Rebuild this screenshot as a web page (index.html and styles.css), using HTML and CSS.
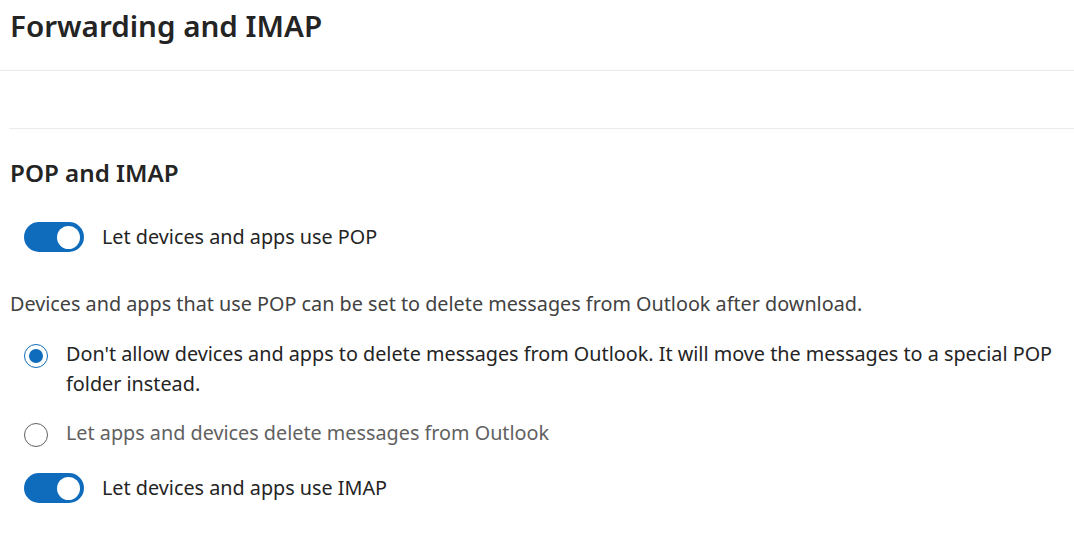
FILE: index.html
```html
<!DOCTYPE html>
<html lang="en">
<head>
<meta charset="utf-8">
<title>Forwarding and IMAP</title>
<link rel="stylesheet" href="styles.css">
</head>
<body>
<header class="page-header">
  <h1 class="page-title">Forwarding and IMAP</h1>
</header>
<div class="forwarding-area"></div>
<section class="section">
  <h2 class="section-title">POP and IMAP</h2>
  <label class="toggle-row">
    <span class="toggle on"><span class="knob"></span></span>
    <span class="toggle-label">Let devices and apps use POP</span>
  </label>
  <p class="description">Devices and apps that use POP can be set to delete messages from Outlook after download.</p>
  <div class="radio-group">
    <label class="radio-row">
      <span class="radio checked"><span class="dot"></span></span>
      <span class="radio-label">Don't allow devices and apps to delete messages from Outlook. It will move the messages to a special POP folder instead.</span>
    </label>
    <label class="radio-row">
      <span class="radio"></span>
      <span class="radio-label muted">Let apps and devices delete messages from Outlook</span>
    </label>
  </div>
  <label class="toggle-row">
    <span class="toggle on"><span class="knob"></span></span>
    <span class="toggle-label">Let devices and apps use IMAP</span>
  </label>
</section>
</body>
</html>
```
FILE: styles.css
```css
html, body {
  margin: 0;
  padding: 0;
  background: #ffffff;
}
body {
  font-family: "Noto Sans", "Open Sans", "DejaVu Sans", sans-serif;
  color: #242424;
  width: 1074px;
  height: 541px;
  overflow: hidden;
}
.page-header {
  height: 71px;
  border-bottom: 1px solid #ebebeb;
  padding-left: 10px;
  box-sizing: border-box;
  display: flex;
  align-items: flex-start;
}
.page-title {
  margin: 0;
  padding-top: 6px;
  font-size: 29.6px;
  font-weight: 600;
  line-height: 40px;
  color: #242424;
}
.forwarding-area {
  margin-left: 9px;
  height: 57px;
  border-bottom: 1px solid #ebebeb;
}
.section {
  padding-left: 10px;
  display: flex;
  flex-direction: column;
}
.section-title {
  margin: 28px 0 0 0;
  font-size: 24.2px;
  font-weight: 600;
  line-height: 32px;
}
.toggle-row {
  display: flex;
  align-items: center;
  gap: 18px;
  margin-left: 14px;
}
.toggle-row:first-of-type {
  margin-top: 33px;
}
.toggle {
  width: 60px;
  height: 30px;
  border-radius: 15px;
  background: #0f6cbd;
  box-sizing: border-box;
  display: flex;
  align-items: center;
  justify-content: flex-end;
  padding-right: 4px;
  flex-shrink: 0;
}
.knob {
  width: 23px;
  height: 23px;
  border-radius: 50%;
  background: #ffffff;
}
.toggle-label {
  font-size: 19.8px;
  font-weight: 400;
  line-height: 28px;
  color: #242424;
}
.description {
  margin: 38px 0 0 0;
  font-size: 19.8px;
  line-height: 28px;
  color: #424242;
}
.radio-group {
  margin-top: 24px;
  margin-left: 14px;
  display: flex;
  flex-direction: column;
  gap: 22px;
  margin-bottom: 25px;
}
.radio-row {
  display: flex;
  align-items: flex-start;
  gap: 18px;
}
.radio {
  width: 24px;
  height: 24px;
  border-radius: 50%;
  border: 1.5px solid #616161;
  box-sizing: border-box;
  flex-shrink: 0;
  margin-top: 2px;
  display: flex;
  align-items: center;
  justify-content: center;
}
.radio.checked {
  border-color: #0f6cbd;
}
.dot {
  width: 14px;
  height: 14px;
  border-radius: 50%;
  background: #0f6cbd;
}
.radio-label {
  font-size: 19.8px;
  line-height: 30px;
  color: #242424;
  margin-top: -3px;
  max-width: 1000px;
}
.radio-label.muted {
  color: #616161;
}
```
